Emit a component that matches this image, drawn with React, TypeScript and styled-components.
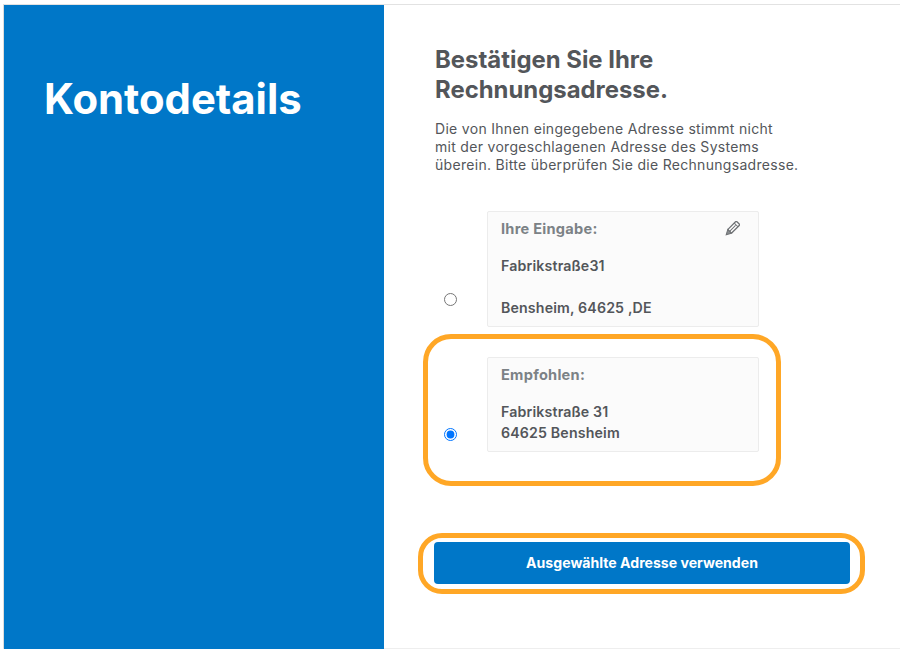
import styled, { createGlobalStyle } from 'styled-components';

const GlobalStyle = createGlobalStyle`
  html, body {
    margin: 0;
    padding: 0;
    background: #fff;
    overflow: hidden;
  }
  body {
    font-family: "Inter", "Open Sans", "Liberation Sans", sans-serif;
  }
`

const PencilIcon = () => (
  <EditIcon viewBox="0 0 16 16" aria-hidden="true">
    <g transform="rotate(45 8 8)" fill="none" stroke="#6f7275" strokeWidth="1.3">
      <rect x="5.4" y="-0.6" width="5.2" height="12" rx="1" fill="#fff" />
      <path d="M5.4 2.2h5.2M8 3v8" strokeWidth="1" />
      <path d="M5.4 11.4L8 16.2l2.6-4.8z" fill="#8a8d90" strokeWidth="1" />
    </g>
  </EditIcon>
)

const App = () => {
  return (
    <>
      <GlobalStyle />
      <Page>
        <Shell>
          <Sidebar>
            <SidebarTitle>Kontodetails</SidebarTitle>
          </Sidebar>
          <Content>
            <Title>Bestätigen Sie Ihre Rechnungsadresse.</Title>
            <Intro>
              Die von Ihnen eingegebene Adresse stimmt nicht
              <br />
              mit der vorgeschlagenen Adresse des Systems
              <br />
              überein. Bitte überprüfen Sie die Rechnungsadresse.
            </Intro>

            <EnteredOption>
              <Radio type="radio" name="address" $bottom={21} />
              <AddressCard $height={116}>
                <CardHeader>
                  <CardLabel>Ihre Eingabe:</CardLabel>
                  <PencilIcon />
                </CardHeader>
                <EnteredStreet>Fabrikstraße31</EnteredStreet>
                <EnteredCity>Bensheim, 64625 ,DE</EnteredCity>
              </AddressCard>
            </EnteredOption>

            <Highlight>
              <Radio type="radio" name="address" defaultChecked $bottom={11} />
              <AddressCard $height={95}>
                <CardHeader>
                  <CardLabel>Empfohlen:</CardLabel>
                </CardHeader>
                <RecommendedLines>
                  Fabrikstraße 31
                  <br />
                  64625 Bensheim
                </RecommendedLines>
              </AddressCard>
            </Highlight>

            <ButtonHighlight>
              <SubmitButton type="button">Ausgewählte Adresse verwenden</SubmitButton>
            </ButtonHighlight>
          </Content>
        </Shell>
      </Page>
    </>
  )
}

export default App

const Page = styled.div`
  width: 900px;
  height: 649px;
  padding: 4px 0 0 3px;
  box-sizing: border-box;
  background: #fff;
`
const Shell = styled.div`
  display: flex;
  height: 645px;
  box-sizing: border-box;
  border-top: 1px solid #e2e2e2;
  border-left: 1px solid #dcdcdc;
  border-bottom: 1px solid #eeeeee;
`
const Sidebar = styled.aside`
  flex: 0 0 380px;
  margin-bottom: -1px;
  background: #0077c8;
  padding: 68px 0 0 40px;
  box-sizing: border-box;
`
const SidebarTitle = styled.h1`
  margin: 0;
  color: #fff;
  font-size: 41.8px;
  line-height: 52px;
  font-weight: 700;
`
const Content = styled.main`
  flex: 1;
  padding: 40px 0 0 51px;
  box-sizing: border-box;
  color: #53565a;
`
const Title = styled.h2`
  margin: 0;
  width: 270px;
  font-size: 23.9px;
  line-height: 29.5px;
  font-weight: 700;
  color: #53565a;
`
const Intro = styled.p`
  margin: 16px 0 0;
  font-size: 14px;
  line-height: 18px;
  letter-spacing: 0.3px;
  font-weight: 400;
  white-space: nowrap;
  color: #53565a;
`
const EnteredOption = styled.div`
  display: flex;
  align-items: flex-end;
  margin: 37px 0 0 9px;
  width: 315px;
`
const Highlight = styled.div`
  display: flex;
  align-items: flex-end;
  box-sizing: border-box;
  width: 358px;
  height: 152px;
  margin: 7px 0 0 -12px;
  padding: 18px 0 29px 16px;
  border: 5px solid #ffa726;
  border-radius: 28px;
`
const Radio = styled.input<{ $bottom: number }>`
  flex: 0 0 13px;
  width: 13px;
  height: 13px;
  margin: 0 30px ${props => props.$bottom}px 0;
`
const AddressCard = styled.div<{ $height: number }>`
  flex: 0 0 272px;
  box-sizing: border-box;
  height: ${props => props.$height}px;
  padding: 8px 13px 0;
  background: #fbfbfb;
  border: 1px solid #ececec;
  border-radius: 2px;
  font-size: 14.2px;
  letter-spacing: 0.15px;
  font-weight: 600;
  color: #53565a;
`
const CardHeader = styled.div`
  display: flex;
  align-items: center;
  justify-content: space-between;
  height: 17px;
`
const CardLabel = styled.span`
  color: #7c8286;
  font-size: 14.6px;
  letter-spacing: 0.25px;
  font-weight: 700;
`
const EditIcon = styled.svg`
  width: 16px;
  height: 16px;
  margin-right: 5px;
`
const EnteredStreet = styled.div`
  margin-top: 20px;
  line-height: 18px;
`
const EnteredCity = styled.div`
  margin-top: 24px;
  line-height: 18px;
`
const RecommendedLines = styled.div`
  margin-top: 18px;
  line-height: 21px;
`
const ButtonHighlight = styled.div`
  box-sizing: border-box;
  width: 447px;
  height: 61px;
  margin: 47px 0 0 -17px;
  padding: 4px 10px 5px 11px;
  border: 5px solid #ffa726;
  border-radius: 24px;
`
const SubmitButton = styled.button`
  display: block;
  width: 100%;
  height: 42px;
  padding: 0 0 2px;
  border: 0;
  border-radius: 4px;
  background: #0077c8;
  color: #fff;
  font-family: inherit;
  font-size: 14.1px;
  font-weight: 700;
`
